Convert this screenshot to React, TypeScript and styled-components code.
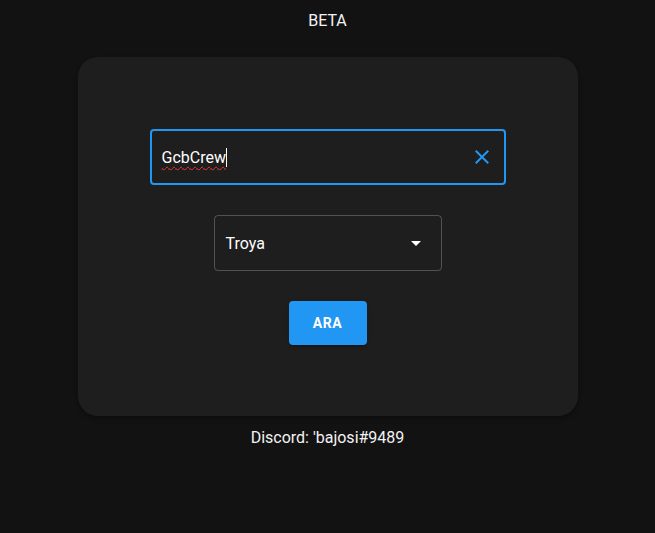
import React from "react";
import styled, { createGlobalStyle } from "styled-components";

const GlobalStyle = createGlobalStyle`
  html, body {
    margin: 0;
    padding: 0;
    background: #121212;
    color: #ffffff;
    font-family: Roboto, "Liberation Sans", Arial, sans-serif;
  }
`;

const Page = styled.div`
  width: 655px;
  min-height: 533px;
  display: flex;
  flex-direction: column;
  align-items: center;
  box-sizing: border-box;
  padding-top: 11px;
`;

const Beta = styled.div`
  font-size: 16px;
  line-height: 19px;
  font-weight: 400;
  color: #f2f2f2;
`;

const Card = styled.div`
  margin-top: 27px;
  width: 500px;
  height: 359px;
  box-sizing: border-box;
  background: #1e1e1e;
  border-radius: 20px;
  display: flex;
  flex-direction: column;
  align-items: center;
  padding-top: 72px;
  box-shadow: 0 2px 4px rgba(0, 0, 0, 0.3);
`;

const Field = styled.div<{ $width: number; $focused?: boolean }>`
  width: ${(p) => p.$width}px;
  height: 56px;
  box-sizing: border-box;
  border-radius: 4px;
  border: ${(p) => (p.$focused ? "2px solid #2196f3" : "1px solid rgba(255,255,255,0.23)")};
  padding: 0 ${(p) => (p.$focused ? 10 : 13)}px 0 ${(p) => (p.$focused ? 10 : 11)}px;
  display: flex;
  align-items: center;
  justify-content: space-between;
  font-size: 16px;
  color: #ffffff;
`;

const Value = styled.span`
  display: flex;
  align-items: center;
`;

const Misspelled = styled.span`
  text-decoration: underline wavy #e53935;
  text-decoration-thickness: 1px;
  text-underline-offset: 3px;
`;

const Caret = styled.span`
  display: inline-block;
  width: 1px;
  height: 19px;
  background: #ffffff;
  margin-left: 0;
`;

const IconBtn = styled.span`
  display: flex;
  width: 24px;
  height: 24px;
  color: #2196f3;
`;

const SelectWrap = styled.div`
  margin-top: 30px;
`;

const Button = styled.button`
  margin-top: 30px;
  width: 78px;
  height: 44px;
  border: none;
  border-radius: 4px;
  background: #2196f3;
  color: #ffffff;
  font-family: Roboto, "Liberation Sans", Arial, sans-serif;
  font-size: 14px;
  font-weight: 700;
  letter-spacing: 0.6px;
  box-shadow: 0 3px 1px -2px rgba(0,0,0,0.2), 0 2px 2px rgba(0,0,0,0.14), 0 1px 5px rgba(0,0,0,0.12);
`;

const Footer = styled.div`
  margin-top: 12px;
  font-size: 16px;
  line-height: 19px;
  color: #f2f2f2;
`;

export default function App() {
  return (
    <>
      <GlobalStyle />
      <Page>
        <Beta>BETA</Beta>
        <Card>
          <Field $width={356} $focused>
            <Value>
              <Misspelled>GcbCrew</Misspelled>
              <Caret />
            </Value>
            <IconBtn>
              <svg viewBox="0 0 24 24" width="24" height="24" fill="currentColor">
                <path d="M19 6.41 17.59 5 12 10.59 6.41 5 5 6.41 10.59 12 5 17.59 6.41 19 12 13.41 17.59 19 19 17.59 13.41 12z" />
              </svg>
            </IconBtn>
          </Field>
          <SelectWrap>
            <Field $width={228}>
              <Value>Troya</Value>
              <IconBtn style={{ color: "#ffffff" }}>
                <svg viewBox="0 0 24 24" width="24" height="24" fill="currentColor">
                  <path d="M7 10l5 5 5-5z" />
                </svg>
              </IconBtn>
            </Field>
          </SelectWrap>
          <Button>ARA</Button>
        </Card>
        <Footer>Discord: 'bajosi#9489</Footer>
      </Page>
    </>
  );
}
